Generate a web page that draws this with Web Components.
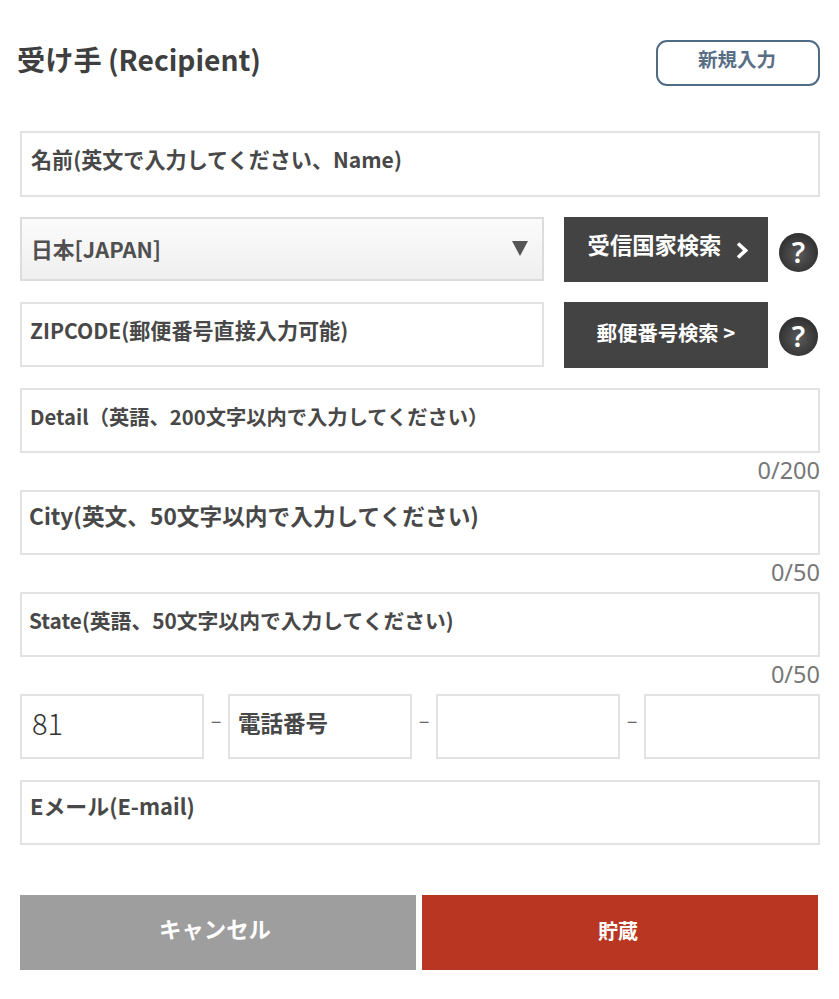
<!DOCTYPE html>
<html lang="ja">
<head>
<meta charset="utf-8">
<title>Recipient</title>
<style>
  html, body { margin: 0; background: #fff; }
  body { font-family: "Noto Sans CJK JP", "Noto Sans", sans-serif; color: #444; }
</style>
</head>
<body>
<recipient-form></recipient-form>

<script>
class FormField extends HTMLElement {
	constructor() {
		super()
		this.attachShadow({ mode: 'open' })
		this.shadowRoot.innerHTML = /* html */ `
      <style>
        :host {
          display: block;
          box-sizing: border-box;
          height: var(--h, 65px);
          border: 2px solid #e2e2e2;
          background: #fff;
          padding: var(--pad, 11px 8px 0 9px);
          font-size: var(--size, 20px);
          font-weight: var(--weight, 700);
          line-height: 30px;
          color: var(--ink, #484848);
          white-space: nowrap;
          overflow: hidden;
        }
      </style>
      <slot></slot>
    `
	}
}

class SelectField extends HTMLElement {
	constructor() {
		super()
		this.attachShadow({ mode: 'open' })
		this.shadowRoot.innerHTML = /* html */ `
      <style>
        :host {
          display: flex;
          align-items: center;
          justify-content: space-between;
          box-sizing: border-box;
          height: 64px;
          border: 2px solid #dcdcdc;
          background: linear-gradient(#fbfbfb, #efefef);
          padding: 0 14px 2px 9px;
          font-size: 21.8px;
          font-weight: 700;
          color: #505050;
        }
        svg { display: block; margin-top: 1px; }
      </style>
      <slot></slot>
      <svg width="16" height="15" viewBox="0 0 16 15"><path d="M0 0h16L8 15z" fill="#555"/></svg>
    `
	}
}

class DarkButton extends HTMLElement {
	constructor() {
		super()
		this.attachShadow({ mode: 'open' })
		this.shadowRoot.innerHTML = /* html */ `
      <style>
        :host {
          display: flex;
          align-items: center;
          justify-content: center;
          box-sizing: border-box;
          width: 204px;
          background: #434343;
          color: #fff;
          font-weight: 700;
          white-space: nowrap;
        }
      </style>
      <slot></slot>
    `
	}
}

class HelpBadge extends HTMLElement {
	constructor() {
		super()
		this.attachShadow({ mode: 'open' })
		this.shadowRoot.innerHTML = /* html */ `
      <style>
        :host {
          display: flex;
          align-items: center;
          justify-content: center;
          box-sizing: border-box;
          width: 39px;
          height: 39px;
          padding-bottom: 3px;
          border-radius: 50%;
          background: radial-gradient(circle at 50% 55%, #5a5a5a, #2f2f2f 75%);
          color: #fff;
          font: 600 29px/1 "Noto Sans", sans-serif;
        }
      </style>
      <slot></slot>
    `
	}
}

class CharCount extends HTMLElement {
	constructor() {
		super()
		this.attachShadow({ mode: 'open' })
		this.shadowRoot.innerHTML = /* html */ `
      <style>
        :host {
          display: block;
          height: 37px;
          box-sizing: border-box;
          padding-top: 3px;
          text-align: right;
          font: 400 23.5px/28px "Noto Sans", sans-serif;
          color: #777;
        }
      </style>
      <slot></slot>
    `
	}
}

class RecipientForm extends HTMLElement {
	constructor() {
		super()
		this.attachShadow({ mode: 'open' })
	}

	static get styles() {
		return /* css */ `
    :host {
      display: flex;
      flex-direction: column;
      box-sizing: border-box;
      width: 839px;
      height: 999px;
      padding: 40px 19px 0 20px;
    }
    .head {
      display: flex;
      justify-content: space-between;
      align-items: center;
      height: 46px;
      margin-bottom: 45px;
    }
    h2 {
      margin: -9px 0 0 -3px;
      font-size: 28.2px;
      font-weight: 700;
      color: #3f3f3f;
      line-height: 40px;
    }
    .new {
      display: flex;
      align-items: center;
      justify-content: center;
      box-sizing: border-box;
      width: 164px;
      height: 46px;
      border: 2px solid #4f6c85;
      border-radius: 11px;
      color: #5a6f85;
      font-size: 19.5px;
      font-weight: 700;
      padding: 0 2px 9px 0;
    }
    .row {
      display: grid;
      grid-template-columns: 524px 204px 39px;
      column-gap: 20px;
      margin-top: 20px;
      align-items: start;
    }
    .row help-badge {
      margin: 16px 0 0 -9px;
    }
    .row.zip help-badge {
      margin-top: 15px;
    }
    .phones {
      display: grid;
      grid-template-columns: 184px 24px 184px 24px 184px 24px 1fr;
    }
    .dash {
      text-align: center;
      font-size: 20px;
      line-height: 52px;
      color: #666;
    }
    .actions {
      display: grid;
      grid-template-columns: 396px 396px;
      column-gap: 6px;
      margin-top: 50px;
    }
    .actions div {
      display: flex;
      align-items: center;
      justify-content: center;
      box-sizing: border-box;
      height: 75px;
      color: #fff;
      font-weight: 700;
    }
    .cancel { background: #9e9e9e; font-size: 22.4px; padding: 0 6px 10px 0; }
    .save { background: #b93722; font-size: 20px; padding: 0 4px 5px 0; }
    .chev { display: block; margin: 12px 0 0 15px; }
    `
	}

	connectedCallback() {
		this.render()
	}

	render() {
		this.shadowRoot.innerHTML = /* html */ `
      <style>${RecipientForm.styles}</style>
      <div class="head">
        <h2>受け手 (Recipient)</h2>
        <div class="new">新規入力</div>
      </div>
      <form-field style="--h:66px;--size:21.1px;--pad:11px 8px 0 9px">名前(英文で入力してください、Name)</form-field>
      <div class="row">
        <select-field>日本[JAPAN]</select-field>
        <dark-button style="font-size:22.3px;padding:0 0 11px 4px;height:65px">受信国家検索<svg class="chev" width="12" height="17" viewBox="0 0 12 17"><path d="M2 1.5 9.5 8.5 2 15.5" fill="none" stroke="#fff" stroke-width="3.6"/></svg></dark-button>
        <help-badge>?</help-badge>
      </div>
      <div class="row zip">
        <form-field style="--size:21.1px;--pad:11px 8px 0 8px">ZIPCODE(郵便番号直接入力可能)</form-field>
        <dark-button style="font-size:20.3px;padding-bottom:6px;height:66px">郵便番号検索 &gt;</dark-button>
        <help-badge>?</help-badge>
      </div>
      <form-field style="--size:20.3px;--pad:11px 8px 0 8px;margin-top:20px">Detail（英語、200文字以内で入力してください）</form-field>
      <char-count>0/200</char-count>
      <form-field style="--size:22.7px;--pad:9px 8px 0 7px">City(英文、50文字以内で入力してください)</form-field>
      <char-count>0/50</char-count>
      <form-field style="--size:20.8px;--pad:11px 8px 0 7px">State(英語、50文字以内で入力してください)</form-field>
      <char-count>0/50</char-count>
      <div class="phones">
        <form-field style="--size:29px;--weight:300;--ink:#333;--pad:11px 8px 0 10px">81</form-field>
        <div class="dash">–</div>
        <form-field style="--size:22.5px;--pad:11px 8px 0 8px">電話番号</form-field>
        <div class="dash">–</div>
        <form-field></form-field>
        <div class="dash">–</div>
        <form-field></form-field>
      </div>
      <form-field style="--size:21.9px;--pad:9px 8px 0 8px;margin-top:21px">Eメール(E-mail)</form-field>
      <div class="actions">
        <div class="cancel">キャンセル</div>
        <div class="save">貯蔵</div>
      </div>
    `
	}
}

customElements.define('form-field', FormField)
customElements.define('select-field', SelectField)
customElements.define('dark-button', DarkButton)
customElements.define('help-badge', HelpBadge)
customElements.define('char-count', CharCount)
customElements.define('recipient-form', RecipientForm)
</script>
</body>
</html>
